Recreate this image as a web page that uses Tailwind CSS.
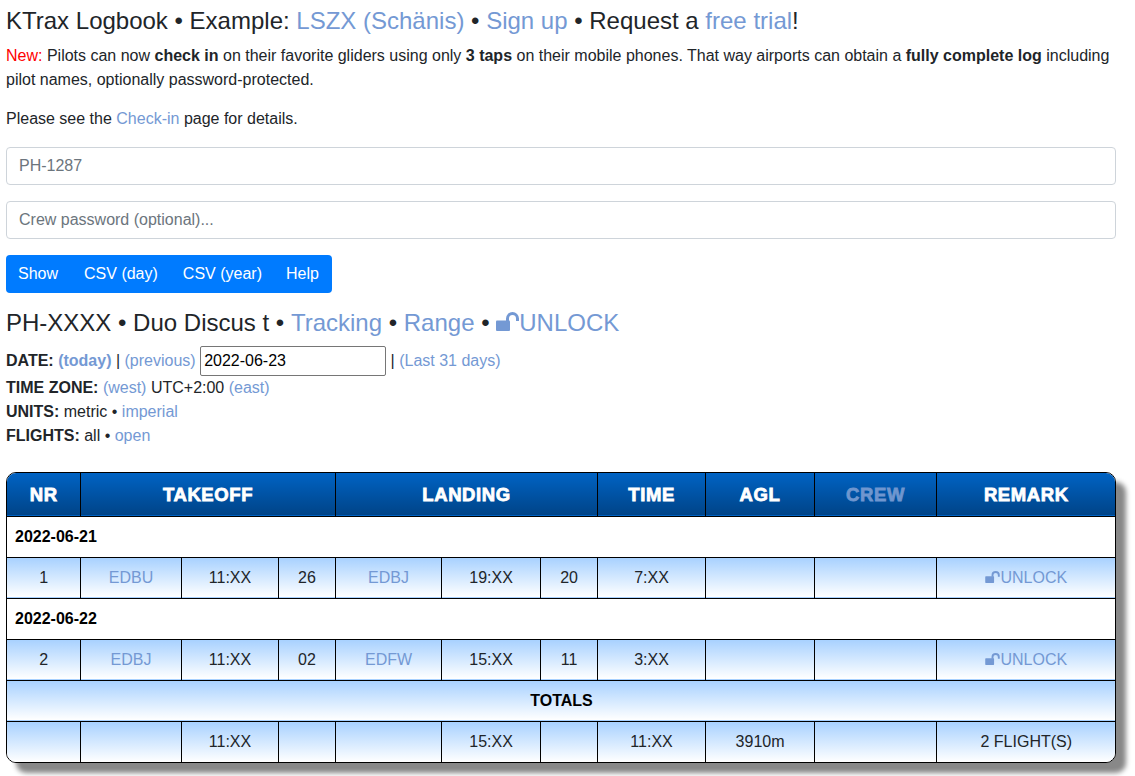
<!DOCTYPE html>
<html lang="en">
<head>
  <meta charset="UTF-8">
  <title>KTrax Logbook</title>
  <script src="https://cdn.jsdelivr.net/npm/@tailwindcss/browser@4"></script>
</head>
<body class="bg-white text-[#212529] text-[16px] leading-6 [font-family:'Liberation_Sans',Arial,sans-serif] min-h-screen">
  <div class="w-[1110px] ml-[6px] pt-[6px]">
    <h1 class="text-[24px] leading-[29px] mb-[9px]">
      KTrax Logbook • Example: <a href="#" class="text-[#7499d4]">LSZX (Schänis)</a> • <a href="#" class="text-[#7499d4]">Sign up</a> • Request a <a href="#" class="text-[#7499d4]">free trial</a>!
    </h1>
    <p class="mb-[15px]">
      <span class="text-[#ff0000]">New:</span> Pilots can now <b>check in</b> on their favorite gliders using only <b>3 taps</b> on their mobile phones. That way airports can obtain a <b>fully complete log</b> including pilot names, optionally password-protected.
    </p>
    <p class="mb-[16px]">Please see the <a href="#" class="text-[#7499d4]">Check-in</a> page for details.</p>

    <form class="flex flex-col">
      <input type="text" value="PH-1287" class="h-[38px] w-full px-3 mb-4 border border-[#ced4da] rounded text-[16px] text-[#6c757d] bg-white">
      <input type="text" placeholder="Crew password (optional)..." class="h-[38px] w-full px-3 mb-4 border border-[#ced4da] rounded text-[16px] text-[#495057] placeholder:text-[#6c757d] bg-white">
      <div class="flex self-start bg-[#007bff] rounded text-white text-[16px] h-[38px] items-center">
        <button type="button" class="pl-3 pr-[14px]">Show</button>
        <button type="button" class="pl-3 pr-[13px]">CSV (day)</button>
        <button type="button" class="px-3">CSV (year)</button>
        <button type="button" class="pl-3 pr-[13px]">Help</button>
      </div>
    </form>

    <h2 class="text-[24px] leading-[29px] mt-[15px] mb-[9px] flex items-center whitespace-pre">PH-XXXX • Duo Discus t • <a href="#" class="text-[#7499d4]">Tracking</a> • <a href="#" class="text-[#7499d4]">Range</a> • <a href="#" class="text-[#7499d4] flex items-center">
        <svg class="w-[23px] h-[19px] -mt-[3px]" viewBox="0 0 23 19" fill="currentColor"><rect x="0" y="8.5" width="14" height="10.5" rx="1"/><path d="M11.5 9V6.5a5 5 0 0 1 10 0V9" fill="none" stroke="currentColor" stroke-width="3"/></svg>UNLOCK</a></h2>

    <div class="mb-[24px]">
      <div class="h-[30px]"><b>DATE:</b> <a href="#" class="text-[#7499d4] font-bold">(today)</a> | <a href="#" class="text-[#7499d4]">(previous)</a> <input type="text" value="2022-06-23" class="w-[186px] h-[30px] border border-[#767676] rounded-[2px] px-[3px] text-[16px] text-black bg-white"> | <a href="#" class="text-[#7499d4]">(Last 31 days)</a></div>
      <div><b>TIME ZONE:</b> <a href="#" class="text-[#7499d4]">(west)</a> UTC+2:00 <a href="#" class="text-[#7499d4]">(east)</a></div>
      <div><b>UNITS:</b> metric • <a href="#" class="text-[#7499d4]">imperial</a></div>
      <div><b>FLIGHTS:</b> all • <a href="#" class="text-[#7499d4]">open</a></div>
    </div>

    <div class="border border-black rounded-[10px] overflow-hidden shadow-[10px_10px_5px_#888] bg-white">
      <table class="w-full table-fixed border-collapse text-[16px] text-center [&_td]:pl-px [&_th]:pl-px [&_th]:pt-[2px]">
        <colgroup>
          <col class="w-[73px]"><col class="w-[101px]"><col class="w-[97px]"><col class="w-[57px]"><col class="w-[106px]"><col class="w-[99px]"><col class="w-[57px]"><col class="w-[108px]"><col class="w-[109px]"><col class="w-[122px]"><col>
        </colgroup>
        <thead>
          <tr class="h-[43px] text-[18.5px] tracking-[0.6px] font-bold text-white bg-gradient-to-b from-[#0063c4] to-[#004488] border-b border-black [-webkit-text-stroke:0.8px_currentColor]">
            <th class="border-r border-black">NR</th>
            <th colspan="3" class="border-r border-black">TAKEOFF</th>
            <th colspan="3" class="border-r border-black">LANDING</th>
            <th class="border-r border-black">TIME</th>
            <th class="border-r border-black">AGL</th>
            <th class="border-r border-black text-[#6f96cf]">CREW</th>
            <th>REMARK</th>
          </tr>
        </thead>
        <tbody>
          <tr class="h-[41px] border-b border-black">
            <td colspan="11" class="text-left pl-2! font-bold text-black">2022-06-21</td>
          </tr>
          <tr class="h-[41px] border-b border-black bg-gradient-to-b from-[#a6d0ff] to-white">
            <td class="border-r border-black">1</td>
            <td class="border-r border-black text-[#7499d4]">EDBU</td>
            <td class="border-r border-black">11:XX</td>
            <td class="border-r border-black">26</td>
            <td class="border-r border-black text-[#7499d4]">EDBJ</td>
            <td class="border-r border-black">19:XX</td>
            <td class="border-r border-black">20</td>
            <td class="border-r border-black">7:XX</td>
            <td class="border-r border-black"></td>
            <td class="border-r border-black"></td>
            <td class="text-[#7499d4]"><a href="#" class="inline-flex items-center"><svg class="w-[15px] h-[12px] -mt-[2px]" viewBox="0 0 23 19" fill="currentColor"><rect x="0" y="8.5" width="14" height="10.5" rx="1"/><path d="M11.5 9V6.5a5 5 0 0 1 10 0V9" fill="none" stroke="currentColor" stroke-width="3"/></svg>UNLOCK</a></td>
          </tr>
          <tr class="h-[41px] border-b border-black">
            <td colspan="11" class="text-left pl-2! font-bold text-black">2022-06-22</td>
          </tr>
          <tr class="h-[41px] border-b border-black bg-gradient-to-b from-[#a6d0ff] to-white">
            <td class="border-r border-black">2</td>
            <td class="border-r border-black text-[#7499d4]">EDBJ</td>
            <td class="border-r border-black">11:XX</td>
            <td class="border-r border-black">02</td>
            <td class="border-r border-black text-[#7499d4]">EDFW</td>
            <td class="border-r border-black">15:XX</td>
            <td class="border-r border-black">11</td>
            <td class="border-r border-black">3:XX</td>
            <td class="border-r border-black"></td>
            <td class="border-r border-black"></td>
            <td class="text-[#7499d4]"><a href="#" class="inline-flex items-center"><svg class="w-[15px] h-[12px] -mt-[2px]" viewBox="0 0 23 19" fill="currentColor"><rect x="0" y="8.5" width="14" height="10.5" rx="1"/><path d="M11.5 9V6.5a5 5 0 0 1 10 0V9" fill="none" stroke="currentColor" stroke-width="3"/></svg>UNLOCK</a></td>
          </tr>
          <tr class="h-[41px] border-b border-black bg-gradient-to-b from-[#a6d0ff] to-white">
            <td colspan="11" class="font-bold text-black">TOTALS</td>
          </tr>
          <tr class="h-[41px] bg-gradient-to-b from-[#a6d0ff] to-white">
            <td class="border-r border-black"></td>
            <td class="border-r border-black"></td>
            <td class="border-r border-black">11:XX</td>
            <td class="border-r border-black"></td>
            <td class="border-r border-black"></td>
            <td class="border-r border-black">15:XX</td>
            <td class="border-r border-black"></td>
            <td class="border-r border-black">11:XX</td>
            <td class="border-r border-black">3910m</td>
            <td class="border-r border-black"></td>
            <td>2 FLIGHT(S)</td>
          </tr>
        </tbody>
      </table>
    </div>
  </div>
</body>
</html>
